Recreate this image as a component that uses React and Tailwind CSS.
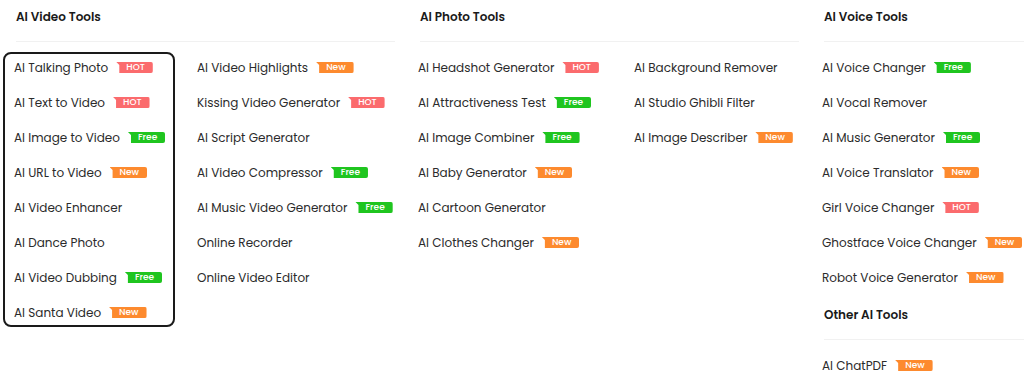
import React from 'react';

const BADGE = {
  HOT: 'bg-[#fb6b6d]',
  New: 'bg-[#fd8a2e]',
  Free: 'bg-[#1fc51f]',
};

function Badge({ type }) {
  return (
    <span
      className={`ml-[8px] inline-flex h-[11px] items-center pl-[10px] pr-[8px] rounded-r-[2px] text-[9px] font-medium leading-none text-white [clip-path:polygon(0_0,100%_0,100%_100%,3px_100%,3px_3px)] ${BADGE[type]}`}
    >
      {type}
    </span>
  );
}

function Item({ label, badge }) {
  return (
    <div className="flex h-[26px] items-center px-[9px] pt-px text-[12px] text-[#2b2b2b] whitespace-nowrap">
      <span>{label}</span>
      {badge && <Badge type={badge} />}
    </div>
  );
}

function List({ items, boxed, width }) {
  return (
    <div
      className={`flex flex-col gap-[9px] border-2 ${boxed ? 'border-[#1a1a1a] rounded-[8px]' : 'border-transparent'} ${width}`}
    >
      {items.map((it) => (
        <Item key={it[0]} label={it[0]} badge={it[1]} />
      ))}
    </div>
  );
}

function Heading({ title, className = '', last }) {
  return (
    <div className={className}>
      <div className="flex h-[32px] items-center pl-[13px] pt-[2px] text-[12px] font-semibold text-[#1a1a1a]">{title}</div>
      <div className={`ml-[13px] mt-[9px] h-px bg-[#f1f1f1] ${last ? '' : 'mr-[12px]'}`} />
    </div>
  );
}

const videoA = [
  ['AI Talking Photo', 'HOT'],
  ['AI Text to Video', 'HOT'],
  ['AI Image to Video', 'Free'],
  ['AI URL to Video', 'New'],
  ['AI Video Enhancer'],
  ['AI Dance Photo'],
  ['AI Video Dubbing', 'Free'],
  ['AI Santa Video', 'New'],
];
const videoB = [
  ['AI Video Highlights', 'New'],
  ['Kissing Video Generator', 'HOT'],
  ['AI Script Generator'],
  ['AI Video Compressor', 'Free'],
  ['AI Music Video Generator', 'Free'],
  ['Online Recorder'],
  ['Online Video Editor'],
];
const photoA = [
  ['AI Headshot Generator', 'HOT'],
  ['AI Attractiveness Test', 'Free'],
  ['AI Image Combiner', 'Free'],
  ['AI Baby Generator', 'New'],
  ['AI Cartoon Generator'],
  ['AI Clothes Changer', 'New'],
];
const photoB = [
  ['AI Background Remover'],
  ['AI Studio Ghibli Filter'],
  ['AI Image Describer', 'New'],
];
const voice = [
  ['AI Voice Changer', 'Free'],
  ['AI Vocal Remover'],
  ['AI Music Generator', 'Free'],
  ['AI Voice Translator', 'New'],
  ['Girl Voice Changer', 'HOT'],
  ['Ghostface Voice Changer', 'New'],
  ['Robot Voice Generator', 'New'],
];

export default function App() {
  return (
    <div className="flex h-[389px] w-[1024px] overflow-hidden bg-white pl-[3px] font-['Poppins','Inter','Noto_Sans',sans-serif]">
      <section className="w-[404px] shrink-0">
        <Heading title="AI Video Tools" />
        <div className="mt-[10px] flex">
          <div className="w-[183px] shrink-0">
            <List items={videoA} boxed width="w-[172px]" />
          </div>
          <List items={videoB} />
        </div>
      </section>

      <section className="w-[404px] shrink-0">
        <Heading title="AI Photo Tools" />
        <div className="mt-[10px] flex">
          <div className="w-[216px] shrink-0">
            <List items={photoA} />
          </div>
          <List items={photoB} />
        </div>
      </section>

      <section className="min-w-0 flex-1">
        <Heading title="AI Voice Tools" last />
        <div className="mt-[10px]">
          <List items={voice} />
        </div>
        <Heading title="Other AI Tools" className="mt-[6px]" last />
        <div className="mt-[10px]">
          <List items={[['AI ChatPDF', 'New']]} />
        </div>
      </section>
    </div>
  );
}
